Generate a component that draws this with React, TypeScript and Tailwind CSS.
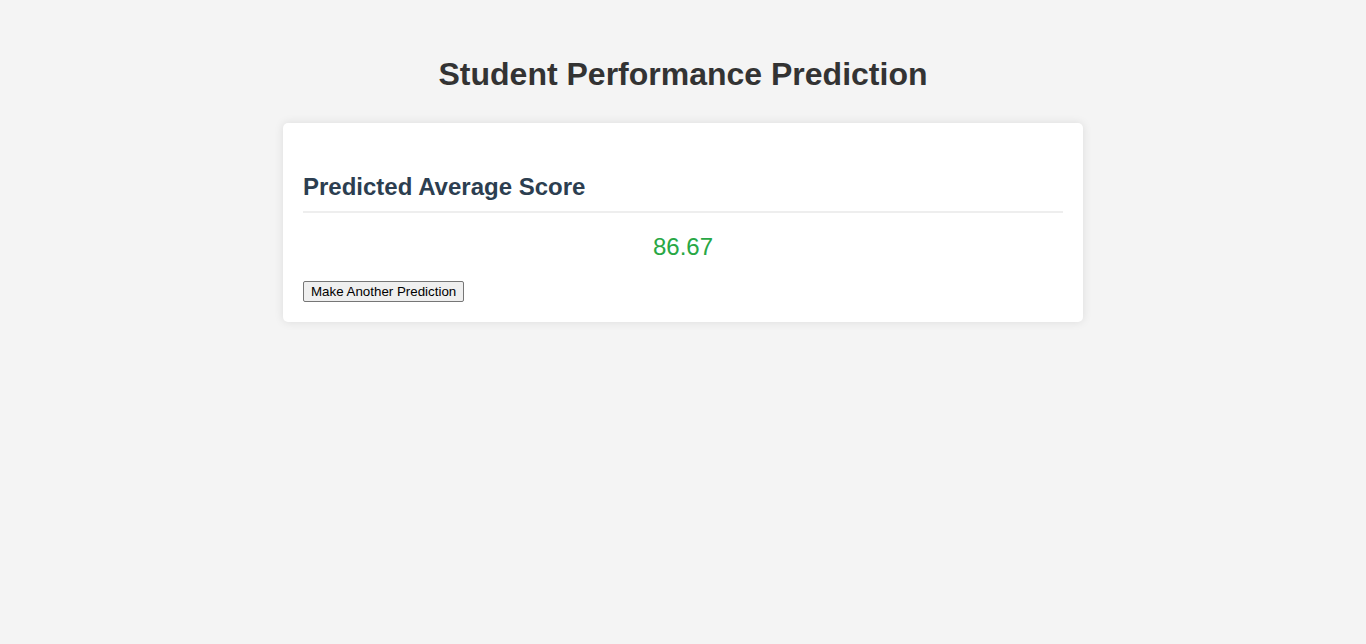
export default function App() {
  return (
    <div className="min-h-screen bg-[#f4f4f4] pt-[56px] font-['Liberation_Sans',Arial,sans-serif]">
      <h1 className="text-center text-[32px] leading-[37px] font-bold text-[#333]">
        Student Performance Prediction
      </h1>

      <div className="mx-auto mt-[30px] w-[800px] rounded-[5px] bg-white p-5 shadow-[0_0_10px_rgba(0,0,0,0.1)]">
        <h2 className="mt-[30px] border-b-2 border-[#eee] pb-[10px] text-[24px] leading-[28px] font-bold text-[#2c3e50]">
          Predicted Average Score
        </h2>
        <p className="mt-5 text-center text-[24px] leading-[28px] text-[#28a745]">86.67</p>
        <button className="mt-5 block h-[21px] rounded-[2px] border border-[#767676] bg-[#efefef] px-[7px] text-[13.33px] leading-[17px] text-black">
          Make Another Prediction
        </button>
      </div>
    </div>
  );
}
